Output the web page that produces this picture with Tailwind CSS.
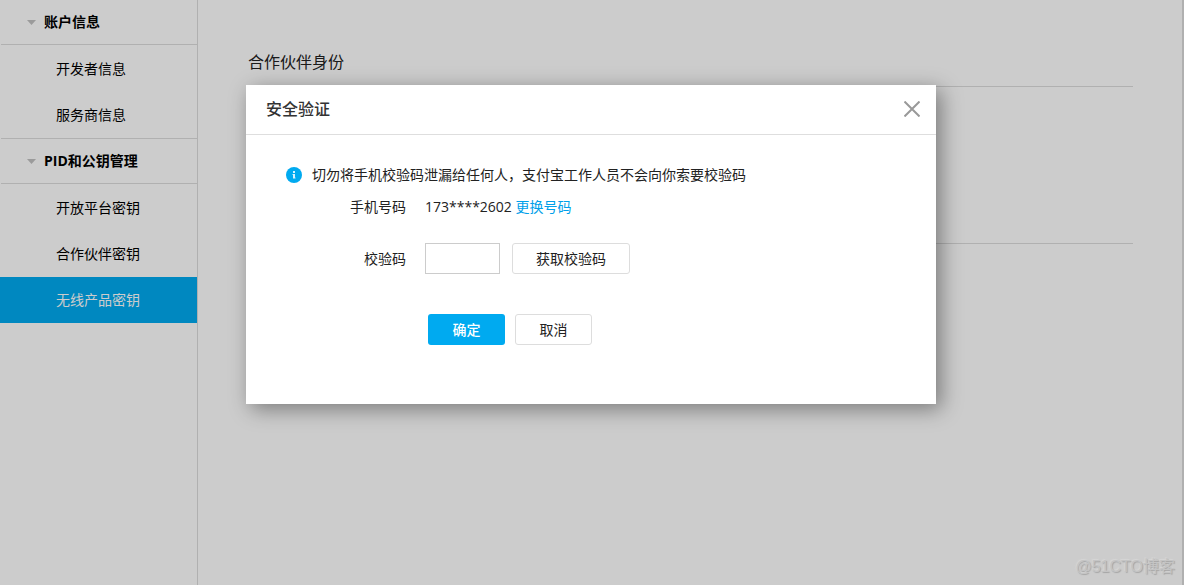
<!DOCTYPE html>
<html lang="zh-CN">
<head>
<meta charset="utf-8">
<meta name="viewport" content="width=device-width, initial-scale=1">
<title>安全验证</title>
<script src="https://cdn.jsdelivr.net/npm/@tailwindcss/browser@4"></script>
</head>
<body class="bg-white font-['Open_Sans','Noto_Sans_CJK_SC',sans-serif] text-sm text-black">
<div class="relative flex min-h-screen border-r-2 border-[#b0b0b0]">

  <!-- Sidebar -->
  <nav class="w-[198px] shrink-0 border-r border-[#dcdcdc]">
    <h2 class="ml-px flex h-[45px] items-center gap-2 border-b border-[#dcdcdc] pl-[26px] font-bold">
      <svg class="h-[5px] w-[9px]" viewBox="0 0 9 5" aria-hidden="true"><path d="M0 0h9L4.500 5z" fill="#c2c2c2"/></svg>
      账户信息
    </h2>
    <ul class="pt-px">
      <li><a href="#" class="flex h-[46px] items-center pl-14">开发者信息</a></li>
      <li><a href="#" class="flex h-[46px] items-center pl-14">服务商信息</a></li>
    </ul>
    <h2 class="ml-px flex h-[46px] items-center gap-2 border-y border-[#dcdcdc] pl-[26px] font-bold">
      <svg class="h-[5px] w-[9px]" viewBox="0 0 9 5" aria-hidden="true"><path d="M0 0h9L4.500 5z" fill="#c2c2c2"/></svg>
      PID和公钥管理
    </h2>
    <ul class="pt-px">
      <li><a href="#" class="flex h-[46px] items-center pl-14">开放平台密钥</a></li>
      <li><a href="#" class="flex h-[46px] items-center pl-14">合作伙伴密钥</a></li>
      <li><a href="#" aria-current="page" class="flex h-[46px] items-center bg-[#00aaf0] pl-14 text-white">无线产品密钥</a></li>
    </ul>
  </nav>

  <!-- Page content -->
  <main class="flex-1 pt-[50px] pr-[49px] pl-[50px]">
    <section class="h-[194px] border-b border-[#dcdcdc]">
      <h1 class="h-[37px] border-b border-[#dcdcdc] text-base leading-6 text-[#222]">合作伙伴身份</h1>
    </section>
  </main>

  <!-- Backdrop and dialog -->
  <div class="absolute inset-0 flex items-start justify-center bg-black/20 pt-[85px]">
    <div role="dialog" aria-modal="true" aria-labelledby="dialog-title" class="w-full max-w-[690px] bg-white pb-[59px] shadow-[5px_5px_20px_rgba(0,0,0,0.4)]">
      <header class="flex h-[50px] items-center justify-between border-b border-[#dedede] pr-4 pb-px pl-5">
        <h2 id="dialog-title" class="text-base font-medium text-[#333]">安全验证</h2>
        <button type="button" aria-label="关闭" class="cursor-pointer">
          <svg class="size-4" viewBox="0 0 16 16" fill="none" stroke="#999" stroke-width="2" aria-hidden="true"><path d="M0.500 0.500l15 15M15.500 0.500l-15 15"/></svg>
        </button>
      </header>
      <form class="pt-[30px] text-[#222]">
        <p class="flex h-5 items-center gap-[10px] pl-10">
          <svg class="size-4 shrink-0" viewBox="0 0 16 16" aria-hidden="true"><circle cx="8" cy="8" r="8" fill="#00aaf0"/><path d="M7 4h2v2H7zM7 7h2v4.500H7zM6.500 7h1v1h-1zM8.500 10.500h1v1h-1z" fill="#fff" fill-opacity=".85"/></svg>
          切勿将手机校验码泄漏给任何人，支付宝工作人员不会向你索要校验码
        </p>
        <div class="mt-3 flex h-5 items-center">
          <span class="w-40 shrink-0 text-right">手机号码</span>
          <span class="ml-[19px]">173****2602 <a href="#" class="text-[#00a0e9]">更换号码</a></span>
        </div>
        <div class="mt-[26px] flex h-[31px] items-center">
          <label for="code" class="w-40 shrink-0 text-right">校验码</label>
          <input id="code" type="text" class="ml-[19px] h-[31px] w-[75px] border border-[#ccc] px-2 outline-none">
          <button type="button" class="ml-3 h-[31px] w-[118px] rounded-[3px] border border-[#ddd]">获取校验码</button>
        </div>
        <div class="mt-10 flex gap-[10px] pl-[182px]">
          <button type="submit" class="h-[31px] w-[77px] rounded-[3px] bg-[#00aaf0] font-medium text-white">确定</button>
          <button type="button" class="h-[31px] w-[77px] rounded-[3px] border border-[#ddd]">取消</button>
        </div>
      </form>
    </div>
  </div>

  <!-- Watermark -->
  <span class="absolute right-[7px] bottom-[6px] font-['Liberation_Sans','Noto_Sans_CJK_SC',sans-serif] text-base leading-6 text-[#c4c4c4] [text-shadow:1px_1px_1px_#a4a4a4,-1px_-1px_1px_#d6d6d6]">@51CTO博客</span>
</div>
</body>
</html>
